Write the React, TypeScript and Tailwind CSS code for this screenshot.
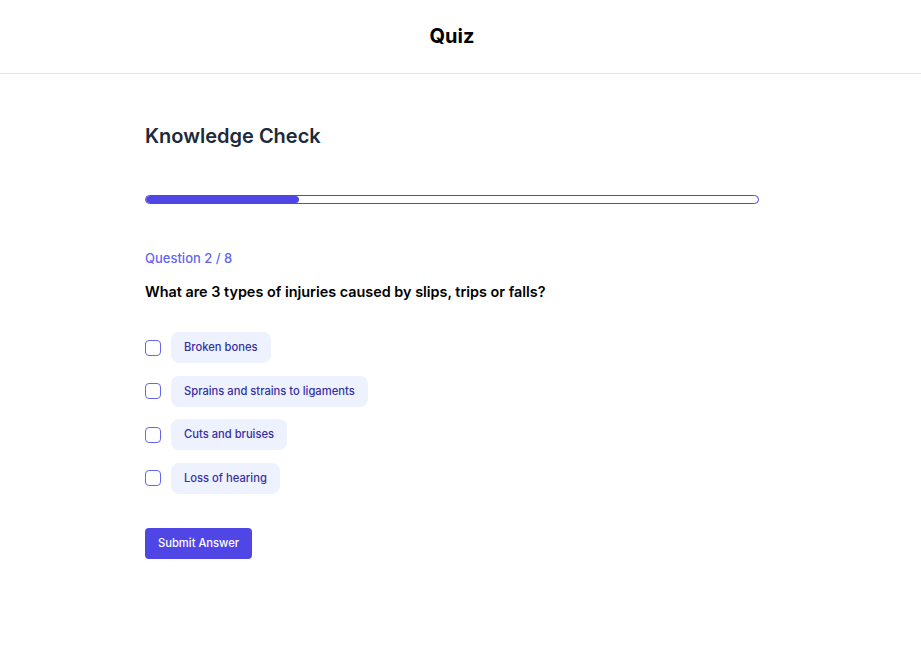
import React, { useState } from "react";

const options = [
  "Broken bones",
  "Sprains and strains to ligaments",
  "Cuts and bruises",
  "Loss of hearing",
];

const App: React.FC = () => {
  const [checked, setChecked] = useState<boolean[]>(options.map(() => false));

  const toggle = (i: number) => {
    setChecked(checked.map((c, idx) => (idx === i ? !c : c)));
  };

  return (
    <div
      className="min-h-screen bg-white text-black"
      style={{ fontFamily: "Inter, 'Noto Sans', sans-serif" }}
    >
      <header className="h-[74px] border-b border-gray-200 flex items-center justify-center pr-[17px] pb-[2px]">
        <h1 className="text-xl font-bold">Quiz</h1>
      </header>

      <main className="pl-[145px] pt-[48px]">
        <h2 className="text-xl font-semibold text-[#1e293b]">Knowledge Check</h2>

        <div className="mt-[45px] w-[614px] h-[9px] rounded-full border border-[#4f46e5] overflow-hidden">
          <div className="h-full w-1/4 bg-[#4f46e5] rounded-full" />
        </div>

        <p className="mt-[45px] text-[13px] font-medium text-[#6366f1]">Question 2 / 8</p>
        <p className="mt-[12px] text-[14.4px] font-semibold">
          What are 3 types of injuries caused by slips, trips or falls?
        </p>

        <ul className="mt-[30px] flex flex-col gap-[12.5px]">
          {options.map((opt, i) => (
            <li key={opt} className="flex items-center gap-[10px]">
              <button
                onClick={() => toggle(i)}
                className={`w-4 h-4 rounded border-[1.5px] border-[#6366f1] ${
                  checked[i] ? "bg-[#4f46e5]" : "bg-white"
                }`}
              />
              <span className="bg-[#eef2ff] text-[#3730a3] text-[11.2px] font-medium px-[13px] h-[31px] flex items-center rounded-lg">
                {opt}
              </span>
            </li>
          ))}
        </ul>

        <button className="mt-[34px] h-[31px] px-[13px] bg-[#4f46e5] text-white text-[11.2px] font-medium rounded">
          Submit Answer
        </button>
      </main>
    </div>
  );
};

export default App;
